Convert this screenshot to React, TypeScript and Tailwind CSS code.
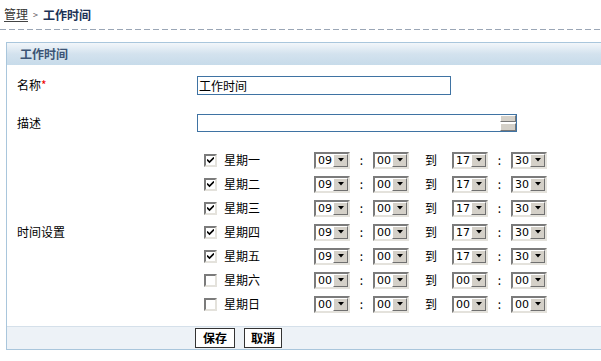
import React from "react";

type Day = {
  name: string;
  on: boolean;
  from: [string, string];
  to: [string, string];
};

const days: Day[] = [
  { name: "星期一", on: true, from: ["09", "00"], to: ["17", "30"] },
  { name: "星期二", on: true, from: ["09", "00"], to: ["17", "30"] },
  { name: "星期三", on: true, from: ["09", "00"], to: ["17", "30"] },
  { name: "星期四", on: true, from: ["09", "00"], to: ["17", "30"] },
  { name: "星期五", on: true, from: ["09", "00"], to: ["17", "30"] },
  { name: "星期六", on: false, from: ["00", "00"], to: ["00", "00"] },
  { name: "星期日", on: false, from: ["00", "00"], to: ["00", "00"] },
];

const CheckBox = ({ checked }: { checked: boolean }) => (
  <span className="flex h-[13px] w-[13px] items-center justify-center border-2 border-t-[#7b7b7b] border-l-[#7b7b7b] border-b-[#e4e2dc] border-r-[#e4e2dc] bg-white">
    {checked && (
      <svg width="7" height="7" viewBox="0 0 7 7">
        <path d="M0 2.5 L2.5 5 L7 0.5" stroke="#000" strokeWidth="1.6" fill="none" />
      </svg>
    )}
  </span>
);

const TimeSelect = ({ value }: { value: string }) => (
  <div className="flex h-[17px] w-[36px] items-center justify-between border-2 border-t-[#7b7b7b] border-l-[#7b7b7b] border-b-[#e4e2dc] border-r-[#e4e2dc] bg-white">
    <span className="pl-[2px] font-['DejaVu_Sans',sans-serif] text-[11px] leading-[13px] text-black">{value}</span>
    <span className="flex h-[13px] w-[15px] items-center justify-center border border-t-white border-l-white border-b-[#707070] border-r-[#707070] bg-[#d4d0c8]">
      <svg width="6" height="4" viewBox="0 0 6 4">
        <path d="M0 0 H6 L3 3.5 Z" fill="#000" />
      </svg>
    </span>
  </div>
);

export default function App() {
  return (
    <div className="h-[361px] w-[601px] overflow-hidden bg-white font-['Noto_Sans_CJK_SC',sans-serif] text-[12px] text-black">
      <div className="flex h-[29px] items-center pl-[4px]">
        <span className="border-b border-[#444] leading-[14px] text-[#333]">管理</span>
        <span className="px-[5px] text-[9px] text-[#555]">&gt;</span>
        <span className="font-bold text-[#1b3256]">工作时间</span>
      </div>
      <div className="h-px bg-[repeating-linear-gradient(90deg,#9aa6b6_0_6px,transparent_6px_9px)]" />

      <div className="ml-[6px] mt-[12px] w-[640px] border-l border-t border-b border-[#a9c6dc]">
        <div className="h-[22px] bg-gradient-to-b from-[#f2f6fa] via-[#d3e2ee] to-[#c7dbea] pl-[13px] text-[12px] font-bold leading-[22px] text-[#3c5475]">
          工作时间
        </div>

        <div className="flex h-[40px] items-center">
          <div className="w-[190px] pl-[10px]">
            名称<span className="text-[#e00]">*</span>
          </div>
          <div className="flex h-[19px] w-[254px] items-center border border-[#3f73a3] pl-[1px] leading-[17px]">
            工作时间
          </div>
        </div>

        <div className="flex h-[35px] items-center">
          <div className="w-[190px] pl-[10px]">描述</div>
          <div className="flex h-[18px] w-[320px] justify-end border border-[#3f73a3]">
            <div className="flex w-[16px] flex-col gap-px">
              <span className="h-[7px] border border-t-white border-l-white border-b-[#777] border-r-[#777] bg-[#d4d0c8]" />
              <span className="h-[8px] border border-t-white border-l-white border-b-[#777] border-r-[#777] bg-[#d4d0c8]" />
            </div>
          </div>
        </div>

        <div className="flex pb-[10px] pt-[8px]">
          <div className="flex w-[190px] items-center pl-[10px]">时间设置</div>
          <div className="flex flex-col">
            {days.map((d) => (
              <div key={d.name} className="flex h-[24px] items-center">
                <div className="w-[27px] pl-[7px]">
                  <CheckBox checked={d.on} />
                </div>
                <div className="w-[90px]">{d.name}</div>
                <TimeSelect value={d.from[0]} />
                <div className="w-[23px] text-center">:</div>
                <TimeSelect value={d.from[1]} />
                <div className="w-[43px] pl-[16px]">到</div>
                <TimeSelect value={d.to[0]} />
                <div className="w-[23px] text-center">:</div>
                <TimeSelect value={d.to[1]} />
              </div>
            ))}
          </div>
        </div>

        <div className="flex h-[23px] items-center gap-[9px] border-t border-[#d5e0ea] bg-[#edf2f7] pl-[188px]">
          <button className="h-[20px] w-[40px] border border-[#333] bg-white text-[12px] font-bold leading-[18px]">保存</button>
          <button className="h-[20px] w-[38px] border border-[#333] bg-white text-[12px] font-bold leading-[18px]">取消</button>
        </div>
      </div>
    </div>
  );
}
